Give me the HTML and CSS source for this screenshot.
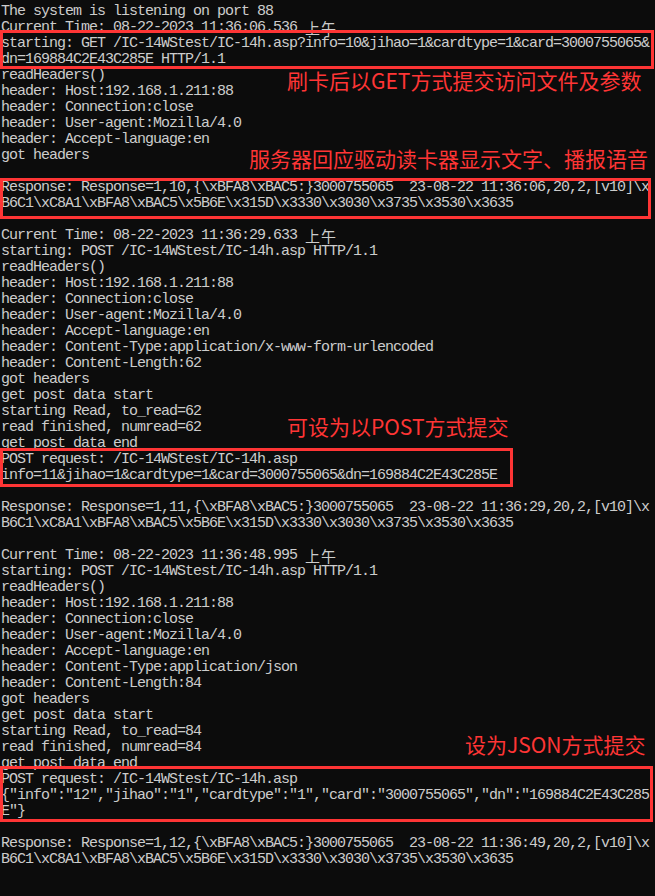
FILE: index.html
```html
<!DOCTYPE html>
<html lang="zh">
<head>
<meta charset="utf-8">
<title>Console</title>
<link rel="stylesheet" href="styles.css">
</head>
<body>
<div class="console">
<pre class="log">The system is listening on port 88
Current Time: 08-22-2023 11:36:06.536 <span class="cjk">上午</span></pre>
<pre class="log box box1">starting: GET /IC-14WStest/IC-14h.asp?info=10&amp;jihao=1&amp;cardtype=1&amp;card=3000755065&amp;
dn=169884C2E43C285E HTTP/1.1</pre>
<pre class="log">readHeaders()
header: Host:192.168.1.211:88
header: Connection:close
header: User-agent:Mozilla/4.0
header: Accept-language:en
got headers
 </pre>
<pre class="log box box2">Response: Response=1,10,{\xBFA8\xBAC5:}3000755065  23-08-22 11:36:06,20,2,[v10]\x
B6C1\xC8A1\xBFA8\xBAC5\x5B6E\x315D\x3330\x3030\x3735\x3530\x3635</pre>
<pre class="log"> 
Current Time: 08-22-2023 11:36:29.633 <span class="cjk">上午</span>
starting: POST /IC-14WStest/IC-14h.asp HTTP/1.1
readHeaders()
header: Host:192.168.1.211:88
header: Connection:close
header: User-agent:Mozilla/4.0
header: Accept-language:en
header: Content-Type:application/x-www-form-urlencoded
header: Content-Length:62
got headers
get post data start
starting Read, to_read=62
read finished, numread=62
get post data end</pre>
<pre class="log box box3">POST request: /IC-14WStest/IC-14h.asp
info=11&amp;jihao=1&amp;cardtype=1&amp;card=3000755065&amp;dn=169884C2E43C285E</pre>
<pre class="log"> 
Response: Response=1,11,{\xBFA8\xBAC5:}3000755065  23-08-22 11:36:29,20,2,[v10]\x
B6C1\xC8A1\xBFA8\xBAC5\x5B6E\x315D\x3330\x3030\x3735\x3530\x3635
 
Current Time: 08-22-2023 11:36:48.995 <span class="cjk">上午</span>
starting: POST /IC-14WStest/IC-14h.asp HTTP/1.1
readHeaders()
header: Host:192.168.1.211:88
header: Connection:close
header: User-agent:Mozilla/4.0
header: Accept-language:en
header: Content-Type:application/json
header: Content-Length:84
got headers
get post data start
starting Read, to_read=84
read finished, numread=84
get post data end</pre>
<pre class="log box box4">POST request: /IC-14WStest/IC-14h.asp
{"info":"12","jihao":"1","cardtype":"1","card":"3000755065","dn":"169884C2E43C285
E"}</pre>
<pre class="log"> 
Response: Response=1,12,{\xBFA8\xBAC5:}3000755065  23-08-22 11:36:49,20,2,[v10]\x
B6C1\xC8A1\xBFA8\xBAC5\x5B6E\x315D\x3330\x3030\x3735\x3530\x3635</pre>

<div class="note note1">刷卡后以GET方式提交访问文件及参数</div>
<div class="note note2">服务器回应驱动读卡器显示文字、播报语音</div>
<div class="note note3">可设为以POST方式提交</div>
<div class="note note4">设为JSON方式提交</div>
</div>
</body>
</html>
```
FILE: styles.css
```css
html, body {
  margin: 0;
  padding: 0;
  background: #0c0c0c;
}

.console {
  position: relative;
  width: 655px;
  height: 896px;
  overflow: hidden;
  box-sizing: border-box;
  padding: 4px 0 0 1px;
  background: #0c0c0c;
}

.log {
  margin: 0;
  font-family: "Liberation Mono", monospace;
  font-size: 15px;
  letter-spacing: -1px;
  line-height: 16px;
  color: #cccccc;
  white-space: pre;
}

.cjk {
  display: inline-block;
  vertical-align: top;
  height: 16px;
  font-family: "Noto Sans CJK SC", sans-serif;
  font-size: 15px;
  letter-spacing: 1px;
  line-height: 16px;
}

.box {
  position: relative;
}

.box::after {
  content: "";
  position: absolute;
  left: -1px;
  border: 3px solid #ff3535;
  box-sizing: border-box;
  pointer-events: none;
}

.box1::after { top: -6px; bottom: -1px; width: 654px; }
.box2::after { top: -2px; bottom: -7px; width: 651px; }
.box3::after { top: -4px; bottom: -3px; width: 513px; }
.box4::after { top: -6px; bottom: -2px; width: 653px; }

.note {
  position: absolute;
  font-family: "Noto Sans CJK SC", "Microsoft YaHei", sans-serif;
  color: #ff3535;
  white-space: nowrap;
  font-weight: 400;
}

.note1 { left: 287px; top: 70px; font-size: 21px; line-height: 21px; }
.note2 { left: 249px; top: 148px; font-size: 21px; line-height: 21px; }
.note3 { left: 287px; top: 416px; font-size: 21px; line-height: 21px; }
.note4 { left: 465px; top: 734px; font-size: 21px; line-height: 21px; }
```
